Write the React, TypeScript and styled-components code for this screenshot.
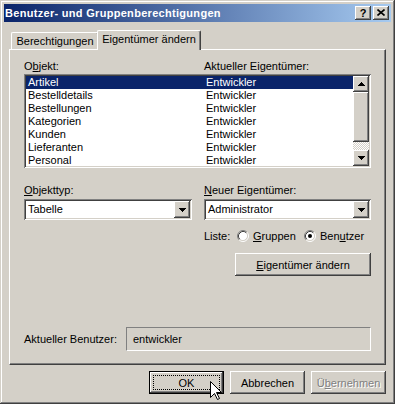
import React from "react";
import styled, { createGlobalStyle, css } from "styled-components";

const GlobalStyle = createGlobalStyle`
  html, body { margin: 0; padding: 0; background: #d4d0c8; }
  body { font-family: "Liberation Sans", Arial, sans-serif; font-size: 11px; color: #000; }
  * { box-sizing: border-box; }
`;

const raised = css`
  box-shadow: inset -1px -1px #404040, inset 1px 1px #fff, inset -2px -2px #808080, inset 2px 2px #d4d0c8;
`;
const sunken = css`
  box-shadow: inset 1px 1px #808080, inset -1px -1px #fff, inset 2px 2px #404040, inset -2px -2px #d4d0c8;
`;

const Window = styled.div`
  position: relative;
  width: 395px;
  height: 404px;
  padding: 4px;
  background: #d4d0c8;
  box-shadow: inset -1px -1px #404040, inset 1px 1px #d4d0c8, inset -2px -2px #808080, inset 2px 2px #fff;
  display: flex;
  flex-direction: column;
  overflow: hidden;
`;

const TitleBar = styled.div`
  height: 18px;
  flex: 0 0 18px;
  display: flex;
  align-items: center;
  padding: 0 2px 0 1px;
  background: linear-gradient(to right, #0a246a, #a6caf0);
`;

const TitleText = styled.span`
  color: #fff;
  font-weight: bold;
  font-size: 11px;
  letter-spacing: 0.3px;
  flex: 1;
  white-space: nowrap;
`;

const CaptionButton = styled.div<{ $gap?: number }>`
  width: 16px;
  height: 14px;
  flex: 0 0 16px;
  margin-left: ${(p) => p.$gap ?? 0}px;
  background: #d4d0c8;
  ${raised};
  display: flex;
  align-items: center;
  justify-content: center;
  font-weight: bold;
  font-size: 11px;
  line-height: 14px;
  padding-bottom: 1px;
`;

const Body = styled.div`
  flex: 1;
  display: flex;
  flex-direction: column;
  padding: 0 5px;
`;

const TabStrip = styled.div`
  margin-top: 8px;
  height: 19px;
  display: flex;
  align-items: flex-end;
  padding-left: 2px;
`;

const Tab = styled.div<{ $active?: boolean; $w: number }>`
  width: ${(p) => p.$w}px;
  height: ${(p) => (p.$active ? 20 : 17)}px;
  margin: ${(p) => (p.$active ? "0 -2px -1px -2px" : "0")};
  position: ${(p) => (p.$active ? "relative" : "static")};
  z-index: ${(p) => (p.$active ? 1 : 0)};
  background: #d4d0c8;
  border-top: 1px solid #fff;
  border-left: 1px solid #fff;
  border-right: 1px solid #404040;
  border-top-left-radius: 2px;
  border-top-right-radius: 2px;
  box-shadow: inset -1px 0 #808080;
  display: flex;
  justify-content: center;
  align-items: flex-start;
  padding-top: 2px;
  line-height: 13px;
  white-space: nowrap;
`;

const Panel = styled.div`
  flex: 0 0 316px;
  height: 316px;
  background: #d4d0c8;
  border-top: 1px solid #fff;
  border-left: 1px solid #fff;
  border-right: 1px solid #404040;
  border-bottom: 1px solid #404040;
  box-shadow: inset -1px -1px #808080;
  padding: 10px 0 0 14px;
  display: flex;
  flex-direction: column;
`;

const LabelRow = styled.div<{ $mt?: number }>`
  display: grid;
  grid-template-columns: 180px 167px;
  height: 13px;
  line-height: 13px;
  margin-top: ${(p) => p.$mt ?? 0}px;
  white-space: nowrap;
`;

const U = styled.span`
  text-decoration: underline;
`;

const ListBox = styled.div`
  margin-top: 1px;
  width: 347px;
  height: 94px;
  background: #fff;
  ${sunken};
  padding: 2px;
  display: flex;
`;

const Rows = styled.div`
  flex: 1;
  overflow: hidden;
`;

const Row = styled.div<{ $selected?: boolean }>`
  display: grid;
  grid-template-columns: 178px 1fr;
  height: 13px;
  line-height: 13px;
  padding-left: 2px;
  background: ${(p) => (p.$selected ? "#0a246a" : "transparent")};
  color: ${(p) => (p.$selected ? "#fff" : "#000")};
  white-space: nowrap;
`;

const ScrollBar = styled.div`
  width: 16px;
  display: flex;
  flex-direction: column;
`;

const ScrollButton = styled.div`
  width: 16px;
  height: 16px;
  flex: 0 0 16px;
  background: #d4d0c8;
  ${raised};
  display: flex;
  align-items: center;
  justify-content: center;
`;

const Thumb = styled.div<{ $h: number }>`
  height: ${(p) => p.$h}px;
  flex: 0 0 ${(p) => p.$h}px;
  background: #d4d0c8;
  ${raised};
`;

const Track = styled.div`
  flex: 1;
  background: repeating-conic-gradient(#fff 0% 25%, #d4d0c8 0% 50%) 0 0 / 2px 2px;
`;

const ComboRow = styled.div`
  margin-top: 2px;
  display: grid;
  grid-template-columns: 168px 167px;
  column-gap: 12px;
`;

const Combo = styled.div`
  height: 21px;
  background: #fff;
  ${sunken};
  padding: 2px;
  display: flex;
  align-items: center;
`;

const ComboText = styled.span`
  flex: 1;
  padding-left: 2px;
  line-height: 17px;
`;

const DropButton = styled.div`
  width: 16px;
  height: 17px;
  background: #d4d0c8;
  ${raised};
  display: flex;
  align-items: center;
  justify-content: center;
`;

const ListeRow = styled.div`
  margin-top: 9px;
  margin-left: 180px;
  height: 14px;
  display: flex;
  align-items: center;
  white-space: nowrap;
`;

const ListeLabel = styled.span`
  width: 33px;
`;

const RadioOption = styled.label<{ $w: number }>`
  width: ${(p) => p.$w}px;
  display: flex;
  align-items: center;
  gap: 4px;
`;

const Button = styled.div<{ $w: number; $default?: boolean; $disabled?: boolean }>`
  position: relative;
  width: ${(p) => p.$w}px;
  height: 23px;
  background: #d4d0c8;
  ${raised};
  border: ${(p) => (p.$default ? "1px solid #000" : "none")};
  display: flex;
  align-items: center;
  justify-content: center;
  white-space: nowrap;
  color: ${(p) => (p.$disabled ? "#808080" : "#000")};
  text-shadow: ${(p) => (p.$disabled ? "1px 1px #fff" : "none")};
  ${(p) =>
    p.$default &&
    css`
      &::after {
        content: "";
        position: absolute;
        inset: 3px;
        border: 1px dotted #000;
      }
    `}
`;

const ChangeButton = styled(Button)`
  margin-top: 10px;
  margin-left: 211px;
`;

const UserRow = styled.div`
  margin-top: auto;
  margin-bottom: 13px;
  display: flex;
  align-items: center;
`;

const UserLabel = styled.span`
  width: 102px;
  white-space: nowrap;
`;

const StaticField = styled.div`
  width: 245px;
  height: 24px;
  border-top: 1px solid #808080;
  border-left: 1px solid #808080;
  border-bottom: 1px solid #fff;
  border-right: 1px solid #fff;
  padding-left: 6px;
  line-height: 22px;
`;

const ButtonRow = styled.div`
  margin-top: 6px;
  display: flex;
  justify-content: flex-end;
  gap: 6px;
`;

const Cursor = styled.svg`
  position: absolute;
  left: 210px;
  top: 381px;
`;

const DownArrow = () => (
  <svg width="7" height="4" viewBox="0 0 7 4" shapeRendering="crispEdges">
    <path d="M0 0h7v1h-1v1h-1v1h-1v1h-1v-1h-1v-1h-1v-1h-1z" fill="#000" />
  </svg>
);

const UpArrow = () => (
  <svg width="7" height="4" viewBox="0 0 7 4" shapeRendering="crispEdges">
    <path d="M3 0h1v1h1v1h1v1h1v1h-7v-1h1v-1h1v-1h1z" fill="#000" />
  </svg>
);

const Radio = ({ checked }: { checked?: boolean }) => (
  <svg width="12" height="12" viewBox="0 0 12 12">
    <circle cx="6" cy="6" r="4.5" fill="#fff" />
    <path d="M2.11 9.89 A5.5 5.5 0 0 1 9.89 2.11" stroke="#808080" fill="none" />
    <path d="M9.89 2.11 A5.5 5.5 0 0 1 2.11 9.89" stroke="#fff" fill="none" />
    <path d="M2.82 9.18 A4.5 4.5 0 0 1 9.18 2.82" stroke="#404040" fill="none" />
    <path d="M9.18 2.82 A4.5 4.5 0 0 1 2.82 9.18" stroke="#d4d0c8" fill="none" />
    {checked && <circle cx="6" cy="6" r="2" fill="#000" />}
  </svg>
);

const rows = [
  "Artikel",
  "Bestelldetails",
  "Bestellungen",
  "Kategorien",
  "Kunden",
  "Lieferanten",
  "Personal",
];

export default function App() {
  return (
    <>
      <GlobalStyle />
      <Window>
        <TitleBar>
          <TitleText>Benutzer- und Gruppenberechtigungen</TitleText>
          <CaptionButton>?</CaptionButton>
          <CaptionButton $gap={2}>
            <svg width="8" height="7" viewBox="0 0 8 7">
              <path d="M0.5 0.5L7.5 6.5M7.5 0.5L0.5 6.5" stroke="#000" strokeWidth="1.6" />
            </svg>
          </CaptionButton>
        </TitleBar>
        <Body>
          <TabStrip>
            <Tab $w={88}>Berechtigungen</Tab>
            <Tab $w={104} $active>
              Eigentümer ändern
            </Tab>
          </TabStrip>
          <Panel>
            <LabelRow>
              <span>
                O<U>b</U>jekt:
              </span>
              <span>Aktueller Eigentümer:</span>
            </LabelRow>
            <ListBox>
              <Rows>
                {rows.map((r, i) => (
                  <Row key={r} $selected={i === 0}>
                    <span>{r}</span>
                    <span>Entwickler</span>
                  </Row>
                ))}
              </Rows>
              <ScrollBar>
                <ScrollButton>
                  <UpArrow />
                </ScrollButton>
                <Thumb $h={50} />
                <Track />
                <ScrollButton>
                  <DownArrow />
                </ScrollButton>
              </ScrollBar>
            </ListBox>
            <LabelRow $mt={16}>
              <span>
                <U>O</U>bjekttyp:
              </span>
              <span>
                <U>N</U>euer Eigentümer:
              </span>
            </LabelRow>
            <ComboRow>
              <Combo>
                <ComboText>Tabelle</ComboText>
                <DropButton>
                  <DownArrow />
                </DropButton>
              </Combo>
              <Combo>
                <ComboText>Administrator</ComboText>
                <DropButton>
                  <DownArrow />
                </DropButton>
              </Combo>
            </ComboRow>
            <ListeRow>
              <ListeLabel>Liste:</ListeLabel>
              <RadioOption $w={67}>
                <Radio />
                <span>
                  <U>G</U>ruppen
                </span>
              </RadioOption>
              <RadioOption $w={70}>
                <Radio checked />
                <span>
                  Ben<U>u</U>tzer
                </span>
              </RadioOption>
            </ListeRow>
            <ChangeButton $w={136}>
              <span>
                <U>E</U>igentümer ändern
              </span>
            </ChangeButton>
            <UserRow>
              <UserLabel>Aktueller Benutzer:</UserLabel>
              <StaticField>entwickler</StaticField>
            </UserRow>
          </Panel>
          <ButtonRow>
            <Button $w={75} $default>
              OK
            </Button>
            <Button $w={75}>Abbrechen</Button>
            <Button $w={75} $disabled>
              <span>
                Ü<U>b</U>ernehmen
              </span>
            </Button>
          </ButtonRow>
        </Body>
        <Cursor width="12" height="20" viewBox="0 0 12 20">
          <path
            d="M0.5 0.5V16.5L4.5 12.5L7.5 18.5L9.5 17.5L6.5 11.5H11.5Z"
            fill="#fff"
            stroke="#000"
            strokeWidth="1"
            strokeLinejoin="miter"
          />
        </Cursor>
      </Window>
    </>
  );
}
